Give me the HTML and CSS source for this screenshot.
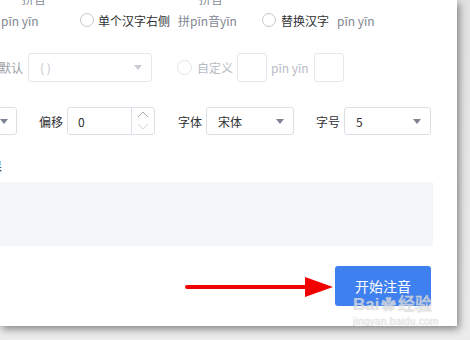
FILE: index.html
```html
<!DOCTYPE html>
<html lang="zh-CN">
<head>
<meta charset="utf-8">
<title>注音</title>
<link rel="stylesheet" href="styles.css">
</head>
<body>
<div class="panel">
  <div class="content">
    <div class="heads">
      <span class="head head1">拼音</span>
      <span class="head head2">拼音</span>
    </div>
    <div class="row row1">
      <span class="ex ex1">pīn yīn</span>
      <label class="radio r1"><span class="dot"></span><span>单个汉字右侧</span></label>
      <span class="ex ex2">拼pīn音yīn</span>
      <label class="radio r2"><span class="dot"></span><span>替换汉字</span></label>
      <span class="ex">pīn yīn</span>
    </div>
    <div class="row row2">
      <span class="muted lbl-def">默认</span>
      <div class="select disabled sel-def"><span>( )</span><span class="caret"></span></div>
      <label class="radio disabled r3"><span class="dot"></span><span>自定义</span></label>
      <div class="box"></div>
      <span class="ex muted2">pīn yīn</span>
      <div class="box"></div>
    </div>
    <div class="row row3">
      <div class="select sel-cut"><span class="caret"></span></div>
      <span class="lbl lbl-off">偏移</span>
      <div class="number">
        <span class="num-val">0</span>
        <span class="spin">
          <svg class="up" width="12" height="8" viewBox="0 0 12 8"><path d="M1 7 L6 2 L11 7" fill="none" stroke="#a4a9b3" stroke-width="1"/></svg>
          <svg class="down" width="12" height="8" viewBox="0 0 12 8"><path d="M1 1 L6 6 L11 1" fill="none" stroke="#d3d6dc" stroke-width="1"/></svg>
        </span>
      </div>
      <span class="lbl lbl-font">字体</span>
      <div class="select sel-font"><span>宋体</span><span class="caret"></span></div>
      <span class="lbl lbl-size">字号</span>
      <div class="select sel-size"><span>5</span><span class="caret"></span></div>
    </div>
    <div class="row row4"><span class="lbl lbl-cut">注音结果</span></div>
    <div class="result"></div>
    <div class="actions"><button class="btn">开始注音</button></div>
  </div>
  <svg class="arrow" width="152" height="24" viewBox="0 0 152 24">
    <line x1="3" y1="11" x2="126" y2="11" stroke="#f20000" stroke-width="4" stroke-linecap="round"/>
    <polygon points="121,1 149,11 121,21" fill="#f20000"/>
  </svg>
  <div class="wm">
    <div class="wm-top">Bai<span class="paw">&#10047;</span>经验</div>
    <div class="wm-bot">jingyan.baidu.com</div>
  </div>
</div>
</body>
</html>
```
FILE: styles.css
```css
html, body {
  margin: 0;
  padding: 0;
}
body {
  width: 470px;
  height: 340px;
  overflow: hidden;
  background: linear-gradient(180deg, #e2e2e2, #ececec);
  font-family: "Noto Sans CJK SC", "Noto Sans", sans-serif;
  font-size: 12px;
  color: #303133;
}
.panel {
  position: relative;
  width: 457px;
  height: 326px;
  background: #fff;
  overflow: hidden;
  box-shadow: 2px 3px 8px rgba(0, 0, 0, 0.45);
}
.content {
  margin-top: -10px;
}
.heads {
  display: flex;
  height: 18px;
  line-height: 18px;
  color: #858b98;
}
.head1 { margin-left: 22px; }
.head2 { margin-left: 153px; }
.row {
  display: flex;
  align-items: center;
}
.row1 {
  height: 24px;
  margin-top: 0;
}
.ex {
  color: #7f8694;
  white-space: nowrap;
}
.ex1 {
  width: 79px;
  padding-left: 1px;
}
.radio {
  display: flex;
  align-items: center;
  white-space: nowrap;
}
.dot {
  width: 12px;
  height: 12px;
  border: 1px solid #c4c8cf;
  border-radius: 50%;
  background: #fff;
  margin-right: 4px;
}
.r1 { width: 98px; }
.ex2 { width: 84px; }
.r2 { width: 75px; }
.r2 .dot { margin-right: 5px; }
.row2 {
  height: 29px;
  margin-top: 21px;
}
.muted { color: #9a9ea6; }
.lbl-def {
  width: 29px;
  margin-left: -1px;
}
.select {
  box-sizing: border-box;
  height: 29px;
  border: 1px solid #dcdfe6;
  border-radius: 3px;
  display: flex;
  align-items: center;
  justify-content: space-between;
  padding: 0 9px 0 11px;
  background: #fff;
}
.select.disabled {
  border-color: #e4e7ed;
  color: #c0c4cc;
}
.caret {
  width: 0;
  height: 0;
  border-left: 4px solid transparent;
  border-right: 4px solid transparent;
  border-top: 5px solid #7d8391;
}
.disabled .caret { border-top-color: #c9ccd3; }
.sel-def {
  width: 124px;
}
.r3 {
  margin-left: 25px;
  color: #b8bcc4;
}
.r3 .dot {
  width: 13px;
  height: 13px;
  border-color: #e1e4ea;
  margin-right: 5px;
}
.box {
  box-sizing: border-box;
  width: 30px;
  height: 29px;
  border: 1px solid #e4e7ed;
  border-radius: 3px;
  margin-left: 4px;
}
.muted2 {
  color: #b8bcc4;
  margin-left: 4px;
  margin-right: 1px;
}
.row3 {
  height: 28px;
  margin-top: 25px;
}
.row3 .select { height: 28px; }
.sel-cut {
  width: 60px;
  margin-left: -43px;
  justify-content: flex-end;
  padding-right: 8px;
}
.lbl {
  color: #303133;
  white-space: nowrap;
}
.lbl-off { margin-left: 22px; margin-right: 4px; }
.number {
  box-sizing: border-box;
  width: 88px;
  height: 28px;
  border: 1px solid #dcdfe6;
  border-radius: 3px;
  display: flex;
  align-items: stretch;
}
.num-val {
  flex: 1;
  display: flex;
  align-items: center;
  padding-left: 10px;
}
.spin {
  width: 22px;
  border-left: 1px solid #dcdfe6;
  display: flex;
  flex-direction: column;
  align-items: center;
  justify-content: space-between;
  padding: 2px 0 3px;
}
.spin svg { display: block; }
.lbl-font { margin-left: 23px; margin-right: 4px; }
.sel-font { width: 88px; }
.lbl-size { margin-left: 22px; margin-right: 4px; }
.sel-size { width: 87px; }
.row4 {
  height: 16px;
  margin-top: 22px;
}
.lbl-cut {
  margin-left: -46px;
}
.result {
  margin-top: 9px;
  width: 433px;
  height: 64px;
  background: #f5f6f8;
}
.actions {
  display: flex;
  justify-content: flex-end;
  width: 431px;
  margin-top: 20px;
}
.btn {
  width: 96px;
  height: 40px;
  border: 0;
  border-radius: 3px;
  background: #3f80f1;
  color: #fff;
  font-family: "Noto Sans CJK SC", sans-serif;
  font-size: 14px;
  padding: 0;
}
.arrow {
  position: absolute;
  left: 184px;
  top: 276px;
}
.wm {
  position: absolute;
  left: 353px;
  top: 294px;
  color: rgba(255, 255, 255, 0.55);
  text-shadow: 0 0 1px rgba(150, 150, 150, 0.6);
  font-family: "Liberation Sans", sans-serif;
  pointer-events: none;
}
.wm-top {
  font-size: 17px;
  font-weight: bold;
  line-height: 22px;
  white-space: nowrap;
}
.paw {
  font-size: 15px;
  margin: 0 2px;
}
.wm-bot {
  font-size: 10px;
  line-height: 12px;
  margin-top: 0;
  letter-spacing: 0.3px;
}
```
